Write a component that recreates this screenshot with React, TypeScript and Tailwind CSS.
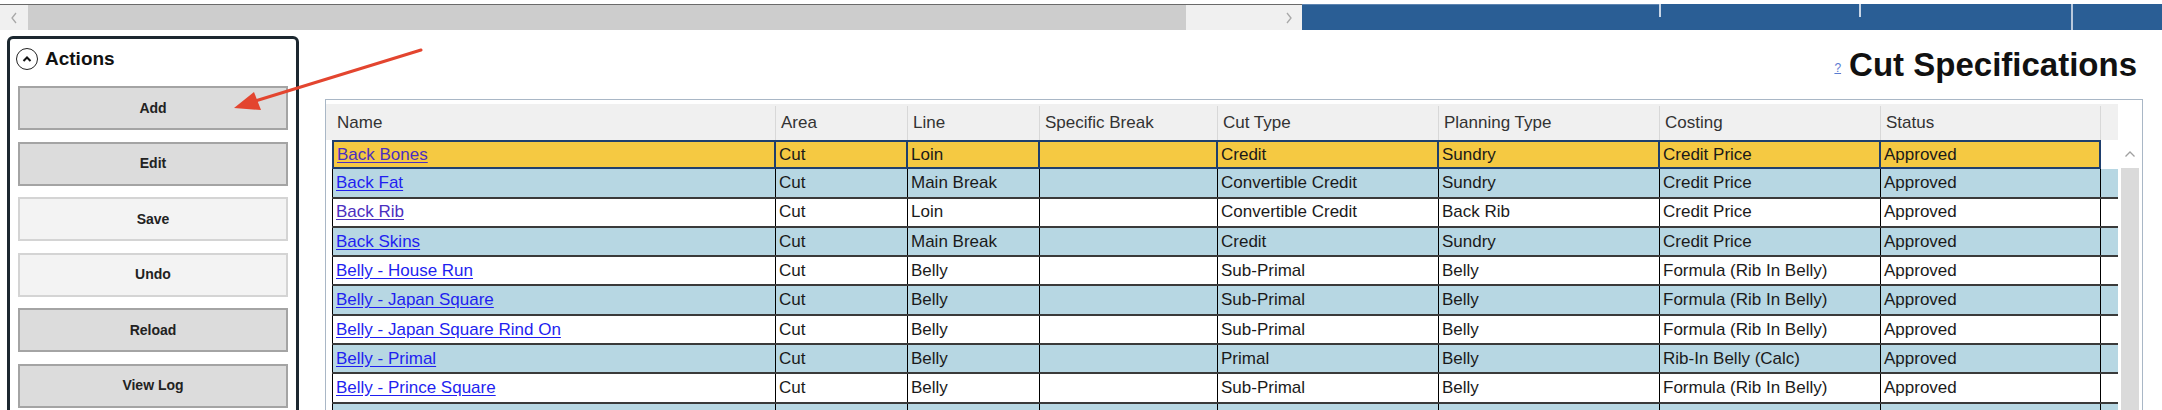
import React from 'react';

type Row = {
  name: string;
  area: string;
  line: string;
  brk: string;
  cutType: string;
  planning: string;
  costing: string;
  status: string;
  visited?: boolean;
};

const rows: Row[] = [
  { name: 'Back Bones', area: 'Cut', line: 'Loin', brk: '', cutType: 'Credit', planning: 'Sundry', costing: 'Credit Price', status: 'Approved', visited: true },
  { name: 'Back Fat', area: 'Cut', line: 'Main Break', brk: '', cutType: 'Convertible Credit', planning: 'Sundry', costing: 'Credit Price', status: 'Approved' },
  { name: 'Back Rib', area: 'Cut', line: 'Loin', brk: '', cutType: 'Convertible Credit', planning: 'Back Rib', costing: 'Credit Price', status: 'Approved', visited: true },
  { name: 'Back Skins', area: 'Cut', line: 'Main Break', brk: '', cutType: 'Credit', planning: 'Sundry', costing: 'Credit Price', status: 'Approved' },
  { name: 'Belly - House Run', area: 'Cut', line: 'Belly', brk: '', cutType: 'Sub-Primal', planning: 'Belly', costing: 'Formula (Rib In Belly)', status: 'Approved' },
  { name: 'Belly - Japan Square', area: 'Cut', line: 'Belly', brk: '', cutType: 'Sub-Primal', planning: 'Belly', costing: 'Formula (Rib In Belly)', status: 'Approved' },
  { name: 'Belly - Japan Square Rind On', area: 'Cut', line: 'Belly', brk: '', cutType: 'Sub-Primal', planning: 'Belly', costing: 'Formula (Rib In Belly)', status: 'Approved' },
  { name: 'Belly - Primal', area: 'Cut', line: 'Belly', brk: '', cutType: 'Primal', planning: 'Belly', costing: 'Rib-In Belly (Calc)', status: 'Approved' },
  { name: 'Belly - Prince Square', area: 'Cut', line: 'Belly', brk: '', cutType: 'Sub-Primal', planning: 'Belly', costing: 'Formula (Rib In Belly)', status: 'Approved' },
  { name: 'Belly - Rib In Square', area: 'Cut', line: 'Belly', brk: '', cutType: 'Sub-Primal', planning: 'Belly', costing: 'Formula (Rib In Belly)', status: 'Obsolete' },
];

const cols: { key: keyof Row; label: string; w: string }[] = [
  { key: 'name', label: 'Name', w: 'w-[444px]' },
  { key: 'area', label: 'Area', w: 'w-[132px]' },
  { key: 'line', label: 'Line', w: 'w-[132px]' },
  { key: 'brk', label: 'Specific Break', w: 'w-[178px]' },
  { key: 'cutType', label: 'Cut Type', w: 'w-[221px]' },
  { key: 'planning', label: 'Planning Type', w: 'w-[221px]' },
  { key: 'costing', label: 'Costing', w: 'w-[221px]' },
  { key: 'status', label: 'Status', w: 'w-[220px]' },
];

const buttons = [
  { label: 'Add', enabled: true },
  { label: 'Edit', enabled: true },
  { label: 'Save', enabled: false },
  { label: 'Undo', enabled: false },
  { label: 'Reload', enabled: true },
  { label: 'View Log', enabled: true },
];

const TopBand = () => (
  <div className="pt-[4px]">
    <div className="flex h-[26px]">
      <div className="flex w-[1302px] border-t border-[#6a6a6a] bg-[#f0f0f0]">
        <div className="flex w-[28px] items-center justify-center">
          <svg width="8" height="12" viewBox="0 0 8 12">
            <polyline points="6,1 2,6 6,11" fill="none" stroke="#a8a8a8" strokeWidth="1.3" />
          </svg>
        </div>
        <div className="w-[1158px] bg-[#cdcdcd]" />
        <div className="flex flex-1 items-center justify-end pr-[9px]">
          <svg width="8" height="12" viewBox="0 0 8 12">
            <polyline points="2,1 6,6 2,11" fill="none" stroke="#a8a8a8" strokeWidth="1.3" />
          </svg>
        </div>
      </div>
      <div className="flex flex-1 bg-[#2a5e95]">
        <div className="w-[357px] border-t border-[#5d84b0]" />
        <div className="h-[13px] w-[2px] bg-[#c9d6e6]" />
        <div className="w-[198px]" />
        <div className="h-[13px] w-[2px] bg-[#c9d6e6]" />
        <div className="w-[210px]" />
        <div className="w-[2px] bg-[#b8c8dc]" />
        <div className="flex-1" />
      </div>
    </div>
  </div>
);

const ActionsPanel = () => (
  <div className="ml-[7px] mt-[6px] h-[400px] w-[292px] rounded-[6px] border-[3px] border-[#1c2830] bg-white">
    <div className="flex h-[24px] items-center gap-[7px] pl-[6px] mt-[8px]">
      <div className="flex h-[22px] w-[22px] items-center justify-center rounded-full border-[1.5px] border-[#222]">
        <svg width="10" height="8" viewBox="0 0 10 8">
          <polyline points="1.5,6 5,2.5 8.5,6" fill="none" stroke="#111" strokeWidth="2" />
        </svg>
      </div>
      <span className="text-[19px] font-bold text-[#111]">Actions</span>
    </div>
    <div className="mt-[15px] flex flex-col gap-[11.5px] px-[8px]">
      {buttons.map((b) => (
        <div
          key={b.label}
          className={
            b.enabled
              ? 'flex h-[44px] items-center justify-center border-2 border-[#a4a4a4] bg-[#dcdcdc] text-[14px] font-bold text-[#222]'
              : 'flex h-[44px] items-center justify-center border-2 border-[#d4d4d4] bg-[#f3f3f3] text-[14px] font-bold text-[#222]'
          }
        >
          {b.label}
        </div>
      ))}
    </div>
  </div>
);

const GridTable = () => (
  <div className="flex h-[320px] border border-[#a9b7c6] bg-white">
    <div className="w-[1792px] pt-[4px]">
      <div className="flex h-[36px] bg-[#f0f0f0] pl-[6px] pt-[2px] text-[17px] text-[#333]">
        {cols.map((c) => (
          <div key={c.key} className={`${c.w} flex items-center border-r border-[#d8d8d8] px-[5px]`}>
            {c.label}
          </div>
        ))}
      </div>
      <div className="pl-[6px]">
        {rows.map((r, i) => {
          const selected = i === 0;
          const bg = selected ? 'bg-[#f5c942]' : i % 2 === 1 ? 'bg-[#b7d7e3]' : 'bg-white';
          return (
            <div
              key={r.name}
              className={
                selected
                  ? 'flex h-[29.3px] text-[17px] text-[#1a1a1a]'
                  : `flex h-[29.3px] border-b-2 border-[#3a3a3a] text-[17px] text-[#1a1a1a] ${bg}`
              }
            >
              {cols.map((c, ci) => {
                const base = selected
                  ? `${c.w} ${bg} flex items-center overflow-hidden whitespace-nowrap border-y-2 border-r-2 border-[#1f3f6e] px-[3px]`
                  : `${c.w} flex items-center overflow-hidden whitespace-nowrap border-r border-black px-[3px]`;
                const first = ci === 0 ? (selected ? ' border-l-2' : ' border-l') : '';
                return (
                  <div key={c.key} className={base + first}>
                    {c.key === 'name' ? (
                      <span
                        className={
                          r.visited
                            ? 'text-[#4b2fc0] underline underline-offset-2'
                            : 'text-[#1f1ff0] underline underline-offset-2'
                        }
                      >
                        {r.name}
                      </span>
                    ) : (
                      r[c.key]
                    )}
                  </div>
                );
              })}
              <div className={selected ? 'flex-1 bg-white' : 'flex-1'} />
            </div>
          );
        })}
      </div>
    </div>
    <div className="flex flex-1 flex-col bg-white pt-[40px]">
      <div className="flex h-[28px] items-center justify-center">
        <svg width="12" height="8" viewBox="0 0 12 8">
          <polyline points="1.5,6.5 6,2 10.5,6.5" fill="none" stroke="#a0a0a0" strokeWidth="1.3" />
        </svg>
      </div>
      <div className="mx-[3px] flex-1 bg-[#dadada]" />
    </div>
  </div>
);

export default function App() {
  return (
    <div className="relative h-[410px] w-[2162px] overflow-hidden bg-white font-['Liberation_Sans',Arial,sans-serif]">
      <TopBand />
      <div className="flex">
        <ActionsPanel />
        <div className="ml-[26px] w-[1818px]">
          <div className="flex h-[69px] items-center justify-end gap-[8px] pr-[6px]">
            <span className="mt-[6px] text-[12px] text-[#5b7bd0] underline">?</span>
            <span className="text-[33px] font-bold leading-none text-[#111]">Cut Specifications</span>
          </div>
          <GridTable />
        </div>
      </div>
      <svg className="pointer-events-none absolute left-0 top-0" width="460" height="140" viewBox="0 0 460 140">
        <line x1="421" y1="50" x2="252" y2="102" stroke="#e3452f" strokeWidth="3" strokeLinecap="round" />
        <polygon points="234,108 254,92 261,110" fill="#e3452f" />
      </svg>
    </div>
  );
}
